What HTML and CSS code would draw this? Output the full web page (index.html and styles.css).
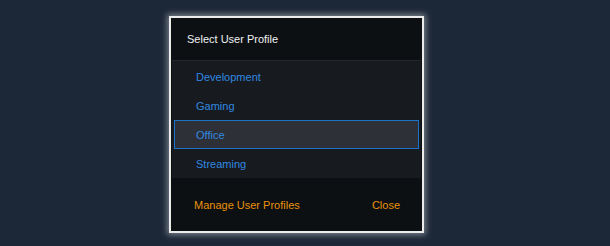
FILE: index.html
```html
<!DOCTYPE html>
<html>
<head>
<meta charset="utf-8">
<link rel="stylesheet" href="styles.css">
</head>
<body>
<div class="dialog">
  <div class="header">Select User Profile</div>
  <div class="list">
    <div class="row">Development</div>
    <div class="row">Gaming</div>
    <div class="row selected">Office</div>
    <div class="row">Streaming</div>
  </div>
  <div class="footer">
    <span class="link">Manage User Profiles</span>
    <span class="link">Close</span>
  </div>
</div>
</body>
</html>
```
FILE: styles.css
```css
html, body {
  margin: 0;
  padding: 0;
}
body {
  background: #1c2737;
  font-family: "Liberation Sans", Arial, sans-serif;
  font-size: 11px;
  width: 610px;
  height: 246px;
  padding-top: 16px;
  box-sizing: border-box;
}
.dialog {
  margin-left: 169px;
  width: 255px;
  height: 217px;
  box-sizing: border-box;
  border: 2px solid #ececec;
  box-shadow: 0 0 6px 2px rgba(230, 235, 240, 0.45);
  background: #0d1012;
  display: flex;
  flex-direction: column;
}
.header {
  height: 42px;
  display: flex;
  align-items: center;
  padding-left: 16px;
  color: #f0f2f4;
}
.list {
  margin: 0 1px;
  height: 118px;
  box-sizing: border-box;
  background: #171a1f;
  border-top: 1px solid #23272c;
  padding: 1px 1px 0;
}
.row {
  height: 29px;
  box-sizing: border-box;
  margin: 0 1px;
  border: 1px solid transparent;
  display: flex;
  align-items: center;
  padding-left: 21px;
  color: #3189e0;
}
.row.selected {
  background: #2d3036;
  border-color: #1c74c8;
}
.footer {
  flex: 1;
  display: flex;
  align-items: center;
  justify-content: space-between;
  padding: 0 22px 0 23px;
}
.link {
  color: #e8900c;
}
```
